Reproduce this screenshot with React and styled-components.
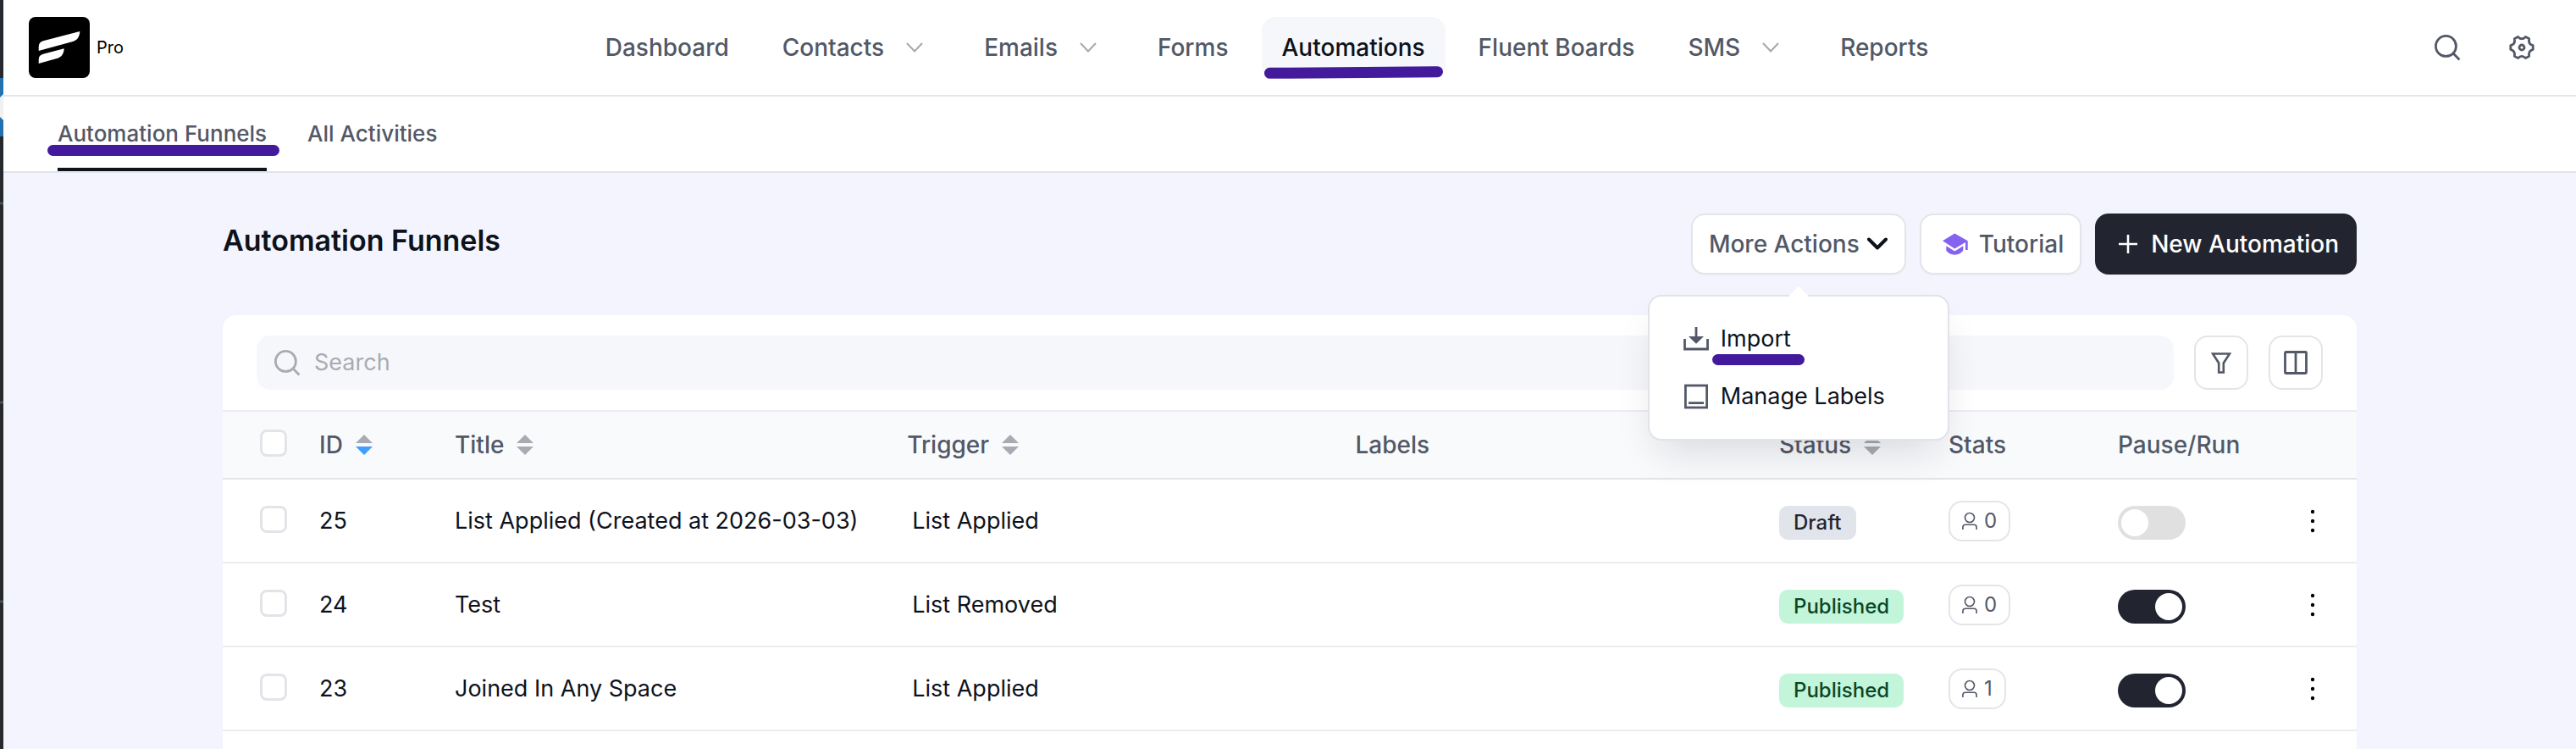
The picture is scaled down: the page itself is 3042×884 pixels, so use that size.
import React from "react";
import styled, { createGlobalStyle } from "styled-components";

const navItems = [
  { label: "Dashboard" },
  { label: "Contacts", menu: true },
  { label: "Emails", menu: true },
  { label: "Forms" },
  { label: "Automations", active: true },
  { label: "Fluent Boards" },
  { label: "SMS", menu: true },
  { label: "Reports" },
];

const funnels = [
  {
    id: 25,
    title: "List Applied (Created at 2026-03-03)",
    trigger: "List Applied",
    status: "Draft",
    stats: 0,
  },
  {
    id: 24,
    title: "Test",
    trigger: "List Removed",
    status: "Published",
    stats: 0,
  },
  {
    id: 23,
    title: "Joined In Any Space",
    trigger: "List Applied",
    status: "Published",
    stats: 1,
  },
];

function Logo() {
  return (
    <svg width="72" height="72" viewBox="0 0 72 72" aria-hidden="true">
      <rect width="72" height="72" rx="8" fill="#000" />
      <path
        fill="#fff"
        d="M11.7 40V35.5C11.7 31.5 13.5 29.3 17 28.3L60.3 17C60 23 57.5 27.5 52 29Z"
      />
      <path
        fill="#fff"
        d="M11.7 55V50.5C11.7 46.8 13.5 44.8 17 43.8L41.7 37.3C41.4 43 39 47.2 34 48.8Z"
      />
    </svg>
  );
}

function SearchIcon() {
  return (
    <svg width="32" height="32" viewBox="0 0 32 32" aria-hidden="true">
      <g fill="none" stroke="currentColor" strokeWidth="2.8">
        <circle cx="14.4" cy="14.4" r="12" />
        <path d="M22.8 22.8L30.4 30.4" />
      </g>
    </svg>
  );
}

function GearIcon() {
  return (
    <svg width="32" height="32" viewBox="-16 -16 32 32" aria-hidden="true">
      <g
        fill="none"
        stroke="currentColor"
        strokeWidth="2.8"
        strokeLinejoin="round"
      >
        <circle r="3" />
        <path d="M13.2 2.4Q7.2 4.2 8.7 10.2L4.5 12.6Q0 8 -4.5 12.6L-8.7 10.2Q-7.2 4.2 -13.2 2.4V-2.4Q-7.2 -4.2 -8.7 -10.2L-4.5 -12.6Q0 -8 4.5 -12.6L8.7 -10.2Q7.2 -4.2 13.2 -2.4Z" />
      </g>
    </svg>
  );
}

function HatIcon() {
  return (
    <svg width="30" height="26" viewBox="0 0 30 26" aria-hidden="true">
      <g fill="#8562f0">
        <path d="M0 9.3L14.3 0.5L29.7 9.3V20H27V11L14.3 18.6Z" />
        <path d="M4.3 15.2L14.3 21.4L24.3 15.2V20.8C22 24 18.5 25.7 14.3 25.7C10.1 25.7 6.6 24 4.3 20.8Z" />
      </g>
    </svg>
  );
}

function PlusIcon() {
  return (
    <svg width="22" height="22" viewBox="0 0 22 22" aria-hidden="true">
      <path d="M11 0V22M0 11H22" stroke="currentColor" strokeWidth="2.6" />
    </svg>
  );
}

function ImportIcon() {
  return (
    <svg width="30" height="28" viewBox="0 0 30 28" aria-hidden="true">
      <path
        d="M1.5 14V26H28.5V14M15 0V13"
        fill="none"
        stroke="currentColor"
        strokeWidth="2.8"
      />
      <path d="M6 11H24L15 19.8Z" fill="currentColor" />
    </svg>
  );
}

function LabelIcon() {
  return (
    <svg width="30" height="30" viewBox="0 0 30 30" aria-hidden="true">
      <g fill="none" stroke="currentColor" strokeWidth="2.8">
        <rect x="2.4" y="2" width="25.2" height="26" />
        <path d="M6 22.6H24" />
      </g>
    </svg>
  );
}

function FilterIcon() {
  return (
    <svg width="24" height="26" viewBox="0 0 24 26" aria-hidden="true">
      <path
        d="M2 2.5H22L14.8 13.5V24.5H9.2V13.5Z"
        fill="none"
        stroke="currentColor"
        strokeWidth="2.6"
      />
    </svg>
  );
}

function ColumnsIcon() {
  return (
    <svg width="28" height="28" viewBox="0 0 28 28" aria-hidden="true">
      <g fill="none" stroke="currentColor" strokeWidth="2.8">
        <rect x="1.5" y="1.5" width="25" height="25" rx="1" />
        <path d="M14 1.5V26.5" />
      </g>
    </svg>
  );
}

function PersonIcon() {
  return (
    <svg width="18" height="22" viewBox="0 0 18 22" aria-hidden="true">
      <g fill="none" stroke="currentColor" strokeWidth="1.6">
        <circle cx="9" cy="7" r="5.5" />
        <path d="M0.9 21V18.5Q0.9 15.3 4 15.3H14Q17.1 15.3 17.1 18.5V21" />
      </g>
    </svg>
  );
}

function DotsIcon() {
  return (
    <svg width="6" height="28" viewBox="0 0 6 28" aria-hidden="true">
      <circle cx="3" cy="3" r="2.2" />
      <circle cx="3" cy="14" r="2.2" />
      <circle cx="3" cy="25" r="2.2" />
    </svg>
  );
}

function SortIcon({ down }) {
  return (
    <svg width="20" height="24" viewBox="0 0 20 24" aria-hidden="true">
      <path d="M0 10L10 0L20 10Z" fill="#a8abb2" />
      <path d="M0 14L10 24L20 14Z" fill={down ? "#409eff" : "#a8abb2"} />
    </svg>
  );
}

function SortHead({ children, down }) {
  return (
    <SortButton type="button">
      {children}
      <SortIcon down={down} />
    </SortButton>
  );
}

function AdminStrip() {
  return (
    <Strip>
      <svg width="4" height="720" viewBox="0 0 4 720" aria-hidden="true">
        <rect y="92" width="4" height="69" fill="#2271b1" />
        <path d="M4 111L0 115V138L4 142Z" fill="#f0f0f1" />
        <path d="M0 240H4M0 475H4M0 710H4" stroke="#4b5057" strokeWidth="3" />
      </svg>
    </Strip>
  );
}

function Header() {
  return (
    <TopBar>
      <Brand href="#">
        <Logo />
        Pro
      </Brand>
      <Nav>
        {navItems.map((item) => (
          <NavLink href="#" key={item.label} $active={item.active}>
            {item.label}
            {item.menu ? (
              <NavChevron width="20" height="12" viewBox="0 0 20 12">
                <path d="M1 1L10 10.5L19 1" />
              </NavChevron>
            ) : null}
            {item.active ? <NavMarker /> : null}
          </NavLink>
        ))}
      </Nav>
      <Tools>
        <ToolButton type="button" aria-label="Search">
          <SearchIcon />
        </ToolButton>
        <ToolButton type="button" aria-label="Settings">
          <GearIcon />
        </ToolButton>
      </Tools>
    </TopBar>
  );
}

function MoreActions() {
  return (
    <MenuWrap>
      <ActionButton type="button" aria-expanded="true">
        More Actions
        <MenuChevron width="26" height="16" viewBox="0 0 26 16">
          <path d="M3 2.5L13 12.5L23 2.5" />
        </MenuChevron>
      </ActionButton>
      <Menu>
        <MenuItem type="button">
          <ImportIcon />
          <MenuText>
            Import
            <MenuMarker />
          </MenuText>
        </MenuItem>
        <MenuItem type="button">
          <LabelIcon />
          <MenuText>Manage Labels</MenuText>
        </MenuItem>
      </Menu>
    </MenuWrap>
  );
}

function FunnelRow({ data }) {
  return (
    <tr>
      <CheckCell>
        <CheckBox type="checkbox" aria-label={"Select " + data.title} />
      </CheckCell>
      <Cell>{data.id}</Cell>
      <Cell>{data.title}</Cell>
      <TriggerCell>{data.trigger}</TriggerCell>
      <Cell />
      <LowCell>
        <Badge $draft={data.status === "Draft"}>{data.status}</Badge>
      </LowCell>
      <Cell>
        <StatsButton type="button">
          <PersonIcon />
          {data.stats}
        </StatsButton>
      </Cell>
      <LowCell>
        <Switch
          type="checkbox"
          role="switch"
          aria-label={"Run " + data.title}
          defaultChecked={data.status === "Published"}
        />
      </LowCell>
      <MoreCell>
        <MoreButton type="button" aria-label="More">
          <DotsIcon />
        </MoreButton>
      </MoreCell>
    </tr>
  );
}

function App() {
  return (
    <Page>
      <GlobalStyle />
      <AdminStrip />
      <Content>
        <Header />
        <SubNav>
          <SubLink href="#" $active>
            Automation Funnels
            <SubMarker />
          </SubLink>
          <SubLink href="#">All Activities</SubLink>
        </SubNav>
        <Main>
          <TitleRow>
            <h1>Automation Funnels</h1>
            <Actions>
              <MoreActions />
              <TutorialButton type="button">
                <HatIcon />
                Tutorial
              </TutorialButton>
              <NewButton type="button">
                <PlusIcon />
                New Automation
              </NewButton>
            </Actions>
          </TitleRow>
          <Card>
            <Toolbar>
              <SearchBox>
                <SearchIcon />
                <input type="text" placeholder="Search" />
              </SearchBox>
              <SquareButton type="button" aria-label="Filter">
                <FilterIcon />
              </SquareButton>
              <SquareButton type="button" aria-label="Columns">
                <ColumnsIcon />
              </SquareButton>
            </Toolbar>
            <Table>
              <colgroup>
                <Col $width="94px" />
                <Col $width="160px" />
                <Col $width="21.2%" />
                <Col $width="21%" />
                <Col />
                <Col $width="200px" />
                <Col $width="200px" />
                <Col $width="200px" />
                <Col $width="102px" />
              </colgroup>
              <thead>
                <tr>
                  <CheckHead>
                    <CheckBox type="checkbox" aria-label="Select all" />
                  </CheckHead>
                  <Head>
                    <SortHead down>ID</SortHead>
                  </Head>
                  <Head>
                    <SortHead>Title</SortHead>
                  </Head>
                  <Head>
                    <SortHead>Trigger</SortHead>
                  </Head>
                  <Head>Labels</Head>
                  <Head>
                    <SortHead>Status</SortHead>
                  </Head>
                  <Head>Stats</Head>
                  <Head>Pause/Run</Head>
                  <Head />
                </tr>
              </thead>
              <tbody>
                {funnels.map((data) => (
                  <FunnelRow data={data} key={data.id} />
                ))}
              </tbody>
            </Table>
          </Card>
        </Main>
      </Content>
    </Page>
  );
}

const GlobalStyle = createGlobalStyle`
  * {
    box-sizing: border-box;
  }

  body {
    margin: 0;
    background-color: #f3f4fd;
    color: #0e121b;
    font-family: Inter, "Liberation Sans", sans-serif;
    font-size: 27px;
    line-height: 40px;
  }

  button,
  input {
    margin: 0;
    font: inherit;
  }

  button {
    padding: 0;
    border: none;
    background: none;
    cursor: pointer;
  }

  a {
    text-decoration: none;
  }

  svg {
    display: block;
    flex: none;
  }
`;

const Page = styled.div`
  display: flex;
  min-height: 100vh;
`;

const Strip = styled.div`
  flex: none;
  width: 4px;
  overflow: hidden;
  background-color: #25292d;
`;

const Content = styled.div`
  flex: 1;
  min-width: 0;
  display: flex;
  flex-direction: column;
`;

const TopBar = styled.header`
  display: flex;
  align-items: center;
  justify-content: space-between;
  height: 114px;
  padding: 0 20px 0 30px;
  border-bottom: 2px solid #e4e5e7;
  background-color: #fff;
`;

const Brand = styled.a`
  display: flex;
  align-items: center;
  gap: 8px;
  color: #000;
  font-size: 20px;
`;

const Nav = styled.nav`
  display: flex;
  gap: 15px;
`;

const NavLink = styled.a`
  position: relative;
  display: flex;
  align-items: center;
  height: 72px;
  padding: 0 24px;
  border-radius: 16px;
  font-size: 28px;
  font-weight: 500;
  color: ${(props) => (props.$active ? "#0e121b" : "#525866")};
  background-color: ${(props) => (props.$active ? "#f5f7fa" : "transparent")};
`;

const NavChevron = styled.svg`
  margin: 0 9px 0 26px;
  fill: none;
  stroke: #a3a9b0;
  stroke-width: 2;
`;

/* hand drawn highlight under a label */
const Marker = styled.span`
  position: absolute;
  height: 13px;
  border-radius: 7px;
  background-color: #421a9b;
`;

const NavMarker = styled(Marker)`
  left: 3px;
  right: 3px;
  bottom: 0;
  transform: rotate(-0.5deg);
`;

const SubMarker = styled(Marker)`
  left: -12px;
  right: -15px;
  bottom: 14px;
`;

const MenuMarker = styled(Marker)`
  left: -10px;
  right: -16px;
  top: 38px;
`;

const Tools = styled.div`
  display: flex;
`;

const ToolButton = styled.button`
  display: flex;
  align-items: center;
  justify-content: center;
  width: 88px;
  height: 72px;
  color: #525866;
`;

const SubNav = styled.nav`
  display: flex;
  gap: 48px;
  height: 90px;
  padding: 0 64px;
  border-bottom: 2px solid #e1e4ea;
  background-color: #fff;
`;

const SubLink = styled.a`
  position: relative;
  display: flex;
  align-items: center;
  padding-top: 3px;
  border-bottom: 4px solid ${(props) => (props.$active ? "#0e121b" : "transparent")};
  color: #525866;
  font-size: 26px;
  font-weight: 500;
`;

const Main = styled.main`
  flex: 1;
  display: flex;
  flex-direction: column;
  width: 100%;
  max-width: 2520px;
  margin: 0 auto;
  padding-top: 48px;
`;

const TitleRow = styled.div`
  display: flex;
  justify-content: space-between;
  margin-bottom: 48px;

  h1 {
    margin: 0;
    font-size: 34px;
    line-height: 64px;
    font-weight: 600;
  }
`;

const Actions = styled.div`
  display: flex;
  gap: 16px;
`;

const MenuWrap = styled.div`
  position: relative;
`;

const ActionButton = styled.button`
  display: flex;
  align-items: center;
  gap: 8px;
  height: 72px;
  padding: 0 19px;
  border: 2px solid #e4e5ea;
  border-radius: 16px;
  background-color: #fff;
  box-shadow: 0 1px 2px rgba(10, 13, 20, 0.04);
  color: #525866;
  font-size: 28px;
  font-weight: 500;
  white-space: nowrap;
`;

const TutorialButton = styled(ActionButton)`
  gap: 13px;
  padding-left: 25px;
`;

const NewButton = styled(ActionButton)`
  gap: 16px;
  padding: 0 19px 0 26px;
  border-color: #222530;
  background-color: #222530;
  color: #fff;
`;

const MenuChevron = styled.svg`
  fill: none;
  stroke: #0e121b;
  stroke-width: 4;
  stroke-linecap: round;
  stroke-linejoin: round;
`;

const Menu = styled.div`
  position: absolute;
  z-index: 2;
  top: 96px;
  left: 50%;
  width: 356px;
  padding: 16px 0;
  border: 2px solid #e1e3e9;
  border-radius: 16px;
  background-color: #fff;
  box-shadow: 0 24px 48px -12px rgba(14, 18, 27, 0.14);
  transform: translateX(-50%);

  &::before {
    content: "";
    position: absolute;
    top: -9px;
    left: 50%;
    width: 16px;
    height: 16px;
    margin-left: -8px;
    border-radius: 3px 0 0 0;
    background-color: #fff;
    transform: rotate(45deg);
  }
`;

const MenuItem = styled.button`
  display: flex;
  align-items: center;
  gap: 14px;
  width: 100%;
  height: 68px;
  padding: 0 40px;
  color: #525866;
`;

const MenuText = styled.span`
  position: relative;
  color: #0e121b;
  white-space: nowrap;
`;

const Card = styled.section`
  flex: 1;
  border-radius: 16px 16px 0 0;
  background-color: #fff;
`;

const Toolbar = styled.div`
  display: flex;
  gap: 24px;
  padding: 24px 40px;
`;

const SearchBox = styled.label`
  flex: 1;
  display: flex;
  align-items: center;
  gap: 16px;
  height: 64px;
  padding: 0 20px;
  border-radius: 16px;
  background-color: #f5f7fa;
  color: #a8abb2;

  input {
    flex: 1;
    padding: 0;
    border: none;
    outline: none;
    background: none;
    color: #0e121b;
  }

  input::placeholder {
    color: #a8abb2;
  }
`;

const SquareButton = styled.button`
  display: flex;
  align-items: center;
  justify-content: center;
  width: 64px;
  height: 64px;
  border: 2px solid #e4e5e8;
  border-radius: 16px;
  color: #525866;
`;

const Table = styled.table`
  width: 100%;
  table-layout: fixed;
  border-collapse: separate;
  border-spacing: 0;
`;

const Col = styled.col`
  width: ${(props) => props.$width || "auto"};
`;

const Head = styled.th`
  height: 82px;
  padding: 0 20px;
  border-top: 2px solid #ebedf0;
  border-bottom: 2px solid #e1e4e8;
  background-color: #f9fafc;
  color: #525866;
  font-size: 28px;
  font-weight: 500;
  text-align: left;
`;

const CheckHead = styled(Head)`
  padding: 0 0 4px 44px;
`;

const SortButton = styled.button`
  display: flex;
  align-items: center;
  gap: 15px;
  color: inherit;
`;

const Cell = styled.td`
  height: 99px;
  padding: 0 20px;
  border-bottom: 2px solid #ebecee;
  white-space: nowrap;
`;

const CheckCell = styled(Cell)`
  padding: 0 0 4px 44px;
`;

const TriggerCell = styled(Cell)`
  padding-left: 26px;
`;

const LowCell = styled(Cell)`
  padding-top: 5px;
`;

const MoreCell = styled(Cell)`
  padding: 0 34px;
`;

const CheckBox = styled.input`
  appearance: none;
  display: block;
  width: 32px;
  height: 32px;
  border: 3px solid #e2e4e8;
  border-radius: 8px;
  background-color: #fff;
`;

const Badge = styled.span`
  display: block;
  width: fit-content;
  padding: 0 17px;
  border-radius: 10px;
  background-color: ${(props) => (props.$draft ? "#e1e4ea" : "#c2f5da")};
  color: ${(props) => (props.$draft ? "#222530" : "#0b4627")};
  font-size: 24px;
  font-weight: 500;
`;

const StatsButton = styled.button`
  display: flex;
  align-items: center;
  gap: 8px;
  height: 48px;
  padding: 0 14px;
  border: 2px solid #e4e5e8;
  border-radius: 16px;
  color: #525866;
  font-size: 24px;
`;

const Switch = styled.input`
  appearance: none;
  display: block;
  width: 80px;
  height: 40px;
  padding: 4px;
  border-radius: 20px;
  background-color: #e0e0e0;

  &::before {
    content: "";
    display: block;
    width: 32px;
    height: 32px;
    border-radius: 50%;
    background-color: #fff;
  }

  &:checked {
    background-color: #222530;
  }

  &:checked::before {
    margin-left: auto;
  }
`;

const MoreButton = styled.button`
  display: flex;
  align-items: center;
  justify-content: center;
  width: 32px;
  height: 40px;
`;

export default App;
